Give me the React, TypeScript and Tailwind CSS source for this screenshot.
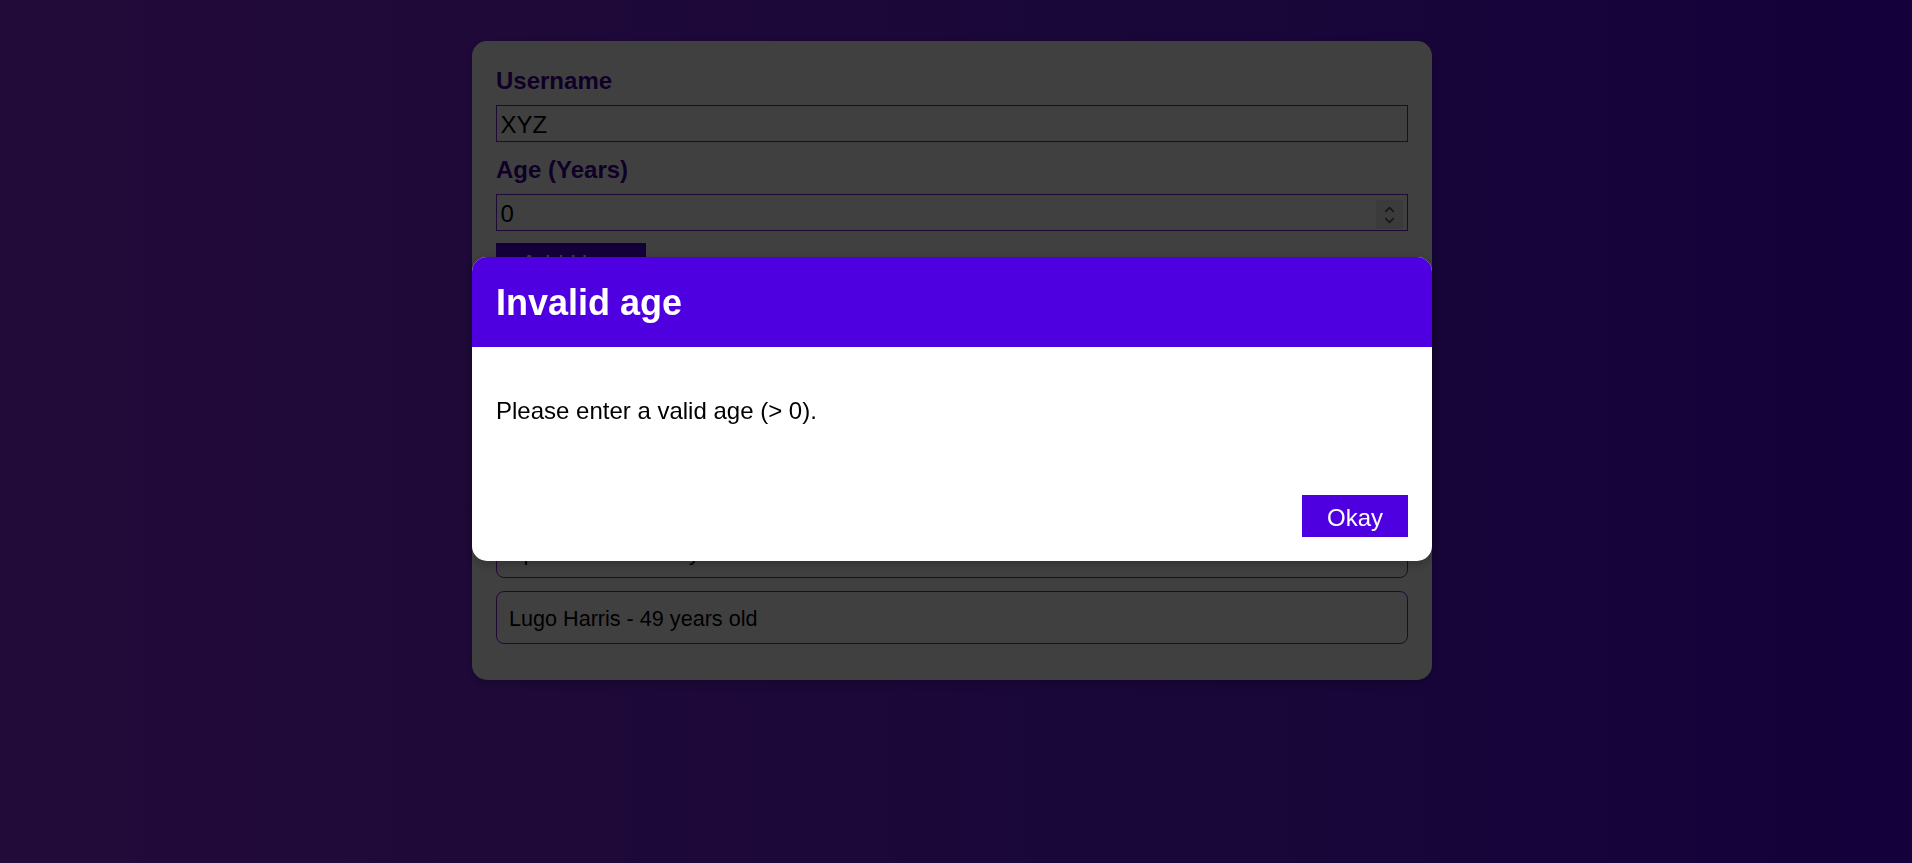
import { ChevronUp, ChevronDown } from 'lucide-react'

const users = [
  { id: 'u1', name: 'Max Schwarz', age: 31 },
  { id: 'u2', name: 'Anna Lee', age: 27 },
  { id: 'u3', name: 'Tom Becker', age: 44 },
  { id: 'u4', name: 'Spencer Reid', age: 32 },
  { id: 'u5', name: 'Lugo Harris', age: 49 },
]

const font = { fontFamily: '"Liberation Sans", Arial, sans-serif' }

export default function App() {
  return (
    <div style={font} className="relative min-h-screen bg-linear-to-r from-[#8a2be2] to-[#5000e6] text-black">
      <div className="flex justify-center pr-2 pt-[41px] pb-10">
        <div className="w-[960px] bg-white rounded-[15px] shadow-[0_3px_12px_rgba(0,0,0,0.26)] px-6 pt-6 pb-[36px]">
          <form className="flex flex-col" onSubmit={e => e.preventDefault()}>
            <label className="text-[24px] leading-[28px] font-bold text-[#40009a] pt-[2px] mb-[10px]">Username</label>
            <input
              readOnly
              value="XYZ"
              className="h-[37px] text-[24px] leading-[28px] px-[3.6px] pt-[2px] border border-[#7a22d8] mb-3 outline-none"
            />
            <label className="text-[24px] leading-[28px] font-bold text-[#40009a] pt-[2px] mb-[10px]">Age (Years)</label>
            <div className="relative mb-3">
              <input
                readOnly
                value="0"
                className="w-full h-[37px] text-[24px] leading-[28px] px-[3.6px] pt-[2px] border border-[#7a22d8] outline-none"
              />
              <span className="absolute right-[5px] top-[6px] w-[27px] h-[29px] bg-[#e9e9e9] flex flex-col items-center justify-center text-[#5a5a5a]">
                <ChevronUp size={15} strokeWidth={2.5} className="-mb-[2px]" />
                <ChevronDown size={15} strokeWidth={2.5} className="-mt-[2px]" />
              </span>
            </div>
            <div>
              <button
                type="submit"
                className="h-[42px] px-6 text-[24px] leading-[28px] text-white bg-[#4f00e0] border border-[#4f00e0]"
              >
                Add User
              </button>
            </div>
          </form>

          <ul className="mt-[42px] flex flex-col gap-[13px]">
            {users.map(u => (
              <li
                key={u.id}
                className="h-[53px] flex items-center px-3 pt-[2px] border-[1.5px] border-[#7a22d8] rounded-[8px] text-[21.6px] leading-[25px]"
              >
                {u.name} - {u.age} years old
              </li>
            ))}
          </ul>
        </div>
      </div>

      <div className="fixed inset-0 z-10 bg-black/75" />

      <div className="fixed inset-x-0 top-[257px] z-20 flex justify-center pr-2">
        <div className="w-[960px] bg-white rounded-[15px] overflow-hidden shadow-[0_3px_12px_rgba(0,0,0,0.26)]">
          <header className="bg-[#4f00e0] px-6 pt-[25px] pb-[23px]">
            <h2 className="m-0 text-white text-[36px] leading-[42px] font-bold">Invalid age</h2>
          </header>
          <div className="p-6">
            <p className="mt-[26px] mb-[22px] text-[24px] leading-[28px]">Please enter a valid age (&gt; 0).</p>
          </div>
          <footer className="p-6 flex justify-end">
            <button className="h-[42px] px-6 pt-[3px] text-[24px] leading-[28px] text-white bg-[#4f00e0] border border-[#4f00e0]">
              Okay
            </button>
          </footer>
        </div>
      </div>
    </div>
  )
}
